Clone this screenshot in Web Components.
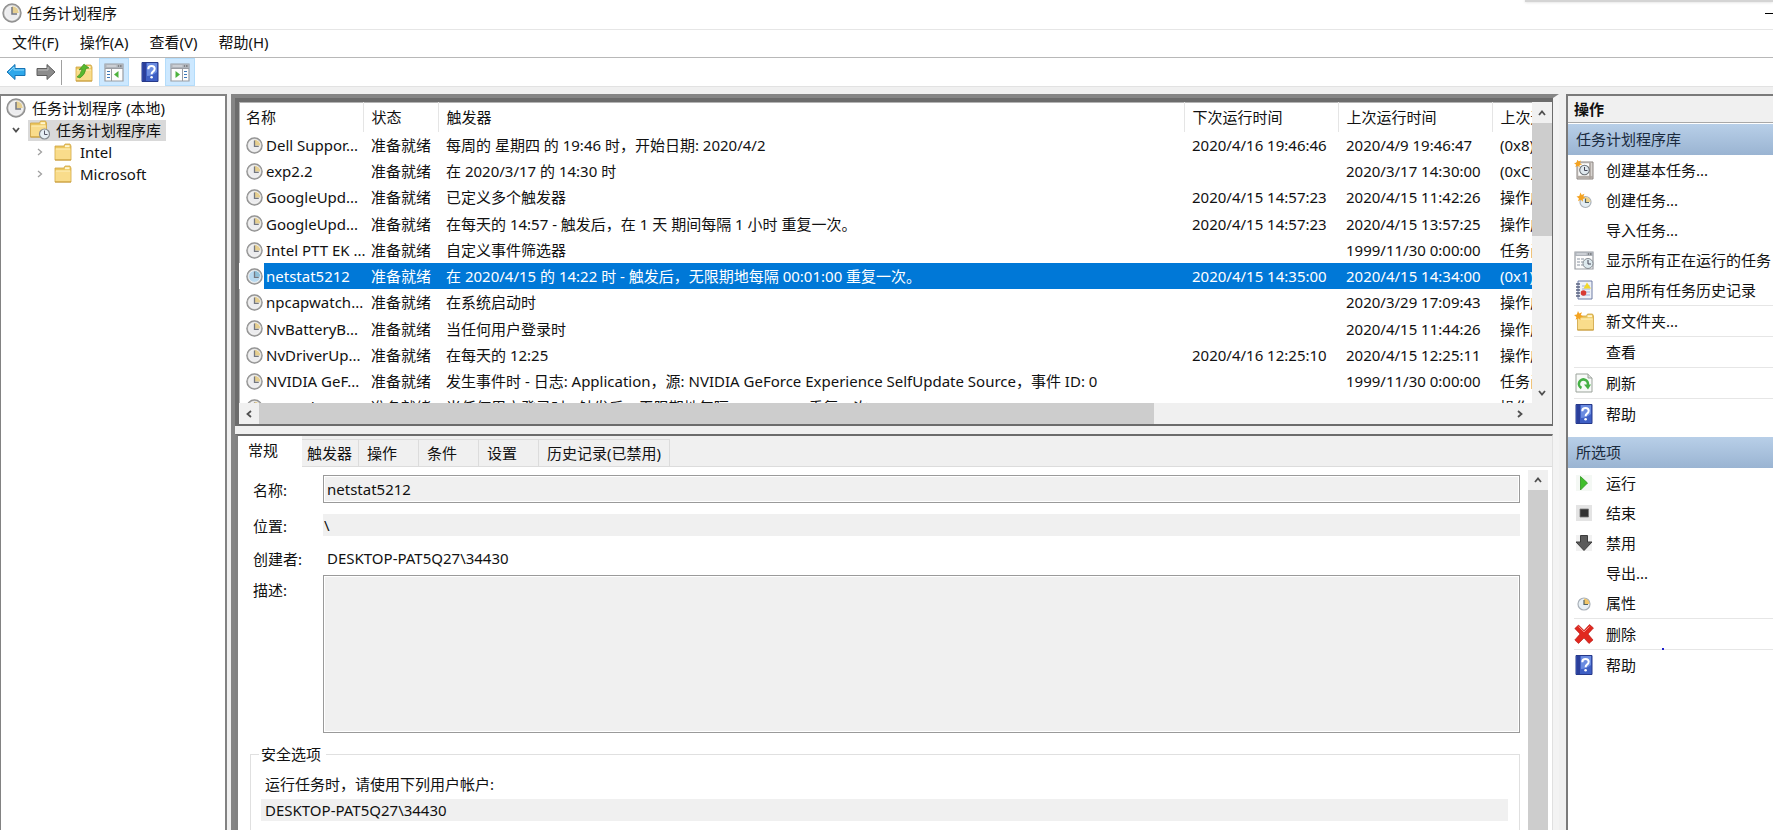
<!DOCTYPE html>
<html lang="zh-CN">
<head>
<meta charset="utf-8">
<title>任务计划程序</title>
<style>
html,body{margin:0;height:100%;overflow:hidden;background:#fff}
body{font:15px/20px "Noto Sans","Noto Sans CJK SC",sans-serif;color:#111}
</style>
</head>
<body>
<task-app></task-app>
<script>
const define = (name, html) => customElements.define(name, class extends HTMLElement {
  connectedCallback() {
    if (this.shadowRoot) return;
    const t = document.createElement('template');
    t.innerHTML = typeof html === 'function' ? html(this) : html;
    this.attachShadow({mode: 'open'}).append(t.content.cloneNode(true));
  }
});

/* ---------- icons ---------- */
const clockArt = (face, wedge) => `<circle cx="10" cy="10" r="9" fill="#c4c4c4" stroke="#909090" stroke-width="1.4"/><circle cx="10" cy="10" r="7" fill="${face}" stroke="#f8f8f8"/><path d="M10 10V3.2A6.8 6.8 0 0 1 16.8 10Z" fill="${wedge}"/><path d="M10 4v7h5" fill="none" stroke="#74777f" stroke-width="1.5"/>`;
const folderArt = '<path d="M2 4h9l1-2h5l1 2v14H2z" fill="#ecc65f" stroke="#cfa544" stroke-width=".8"/><path d="M12 3.2h4.500v2H12z" fill="#fff6d0"/><path d="M2.500 6.500h15V17.500h-15z" fill="#f9dc8b"/><path d="M3 7h14" stroke="#fff0bd"/><path d="M2 18h16" stroke="#c79c3c"/>';
const star = '<path d="M5 0l1.500 3L10 1.500 8.500 5l3 2-3.500 1v3.500L5.500 9 2 11l1-3.500L0 5l3.500-.5z" fill="#f4a321"/>';
const winArt = '<path d="M1 2h18v17H1z" fill="#fdfdfd" stroke="#9a9da3" stroke-width="1.200"/><path d="M1 2h18v4H1z" fill="#aeb3ba"/><path d="M2.500 4h10" stroke="#e8eaee"/><path d="M14 4h1m1 0h1.500" stroke="#555"/>';
const ICONS = {
  clock: clockArt('#ececee', '#e6cf90'),
  'clock-sel': clockArt('#b9daf0', '#8fc0d8'),
  mini: '<circle cx="10" cy="11" r="6" fill="#e8f0f6" stroke="#a9b0b8" stroke-width="1.200"/><path d="M10 11V5.500A5.500 5.500 0 0 1 15.500 11Z" fill="#f1c66a"/><path d="M10 7v4.500h4" fill="none" stroke="#566" stroke-width="1.200"/>',
  'new-task': '<circle cx="11.500" cy="12" r="5.500" fill="#e4edf4" stroke="#a9b0b8" stroke-width="1.200"/><path d="M11.500 12V7A5 5 0 0 1 16.500 12Z" fill="#f1d48a"/><path d="M11.500 8.500v4h3.500" fill="none" stroke="#566" stroke-width="1.200"/><g transform="translate(2.500 2.500) scale(.8)">' + star + '</g>',
  basic: '<path d="M3 2h16v17H3z" fill="#d8d4d0" stroke="#8b8480"/><path d="M4.500 3.500h11v12h-11z" fill="#fff"/><path d="M16 3v16M4 17h15" stroke="#a8a09a" stroke-width="1.500"/><circle cx="10.500" cy="10" r="4.800" fill="#dfe8ee" stroke="#6c7278" stroke-width="1.100"/><path d="M10.500 7v3.500h3" fill="none" stroke="#445"/><g transform="translate(0 -.5) scale(.7)">' + star + '</g>',
  folder: folderArt,
  'folder-new': '<g transform="translate(1.500 1)">' + folderArt + '</g><g transform="scale(.8)">' + star + '</g>',
  'folder-clock': '<g transform="translate(-1.500 -1)">' + folderArt + '</g><circle cx="14.500" cy="14" r="5" fill="#e6eff5" stroke="#858b91" stroke-width="1.200"/><path d="M14.500 10.500v4h3" fill="none" stroke="#556"/>',
  up: '<g transform="translate(0 1)">' + folderArt + '</g><path d="M3 15q4-3 5-8L5 8l5-6 5 4-3 .5Q11 13 6 16z" fill="#57b82e" stroke="#37881b" stroke-width=".6"/>',
  back: '<path d="M1 10 9 2.500V6.500h10v7H9v4z" fill="#2fa8ea" stroke="#1673b4"/><path d="M3 10l5-5v3h10" fill="none" stroke="#8fd8fa"/>',
  fwd: '<path d="M19 10l-8-7.500V6.500H1v7h10v4z" fill="#8c8c8c" stroke="#5f5f5f"/><path d="M2 8h10V5" fill="none" stroke="#bbb"/>',
  help: '<path d="M2 .5h16v19H2z" fill="#3e5fc4" stroke="#26398a"/><path d="M3 1h3v18H3z" fill="#2b3f9b"/><path d="M7 1h10v9q-5 4-10 4z" fill="#6b8ce0"/><path d="M8.300 7.200q0-3.200 3.200-3.200t3.200 2.800q0 1.700-1.700 2.800-1.400 1-1.400 2.600" fill="none" stroke="#fff" stroke-width="2"/><circle cx="11.600" cy="15.300" r="1.300" fill="#fff"/>',
  'pane-left': winArt + '<path d="M7.500 6.500V19M1 6.500h18" stroke="#9a9da3"/><path d="M3 9.500h3M3 12.500h3M3 15.500h3" stroke="#3d78b8"/><path d="M14.500 9v7L10 12.500z" fill="#4db33d"/>',
  'pane-right': winArt + '<path d="M12.500 6.500V19M1 6.500h18" stroke="#9a9da3"/><path d="M14 9.500h3M14 12.500h3M14 15.500h3" stroke="#3d78b8"/><path d="M5.500 9v7l4.500-3.500z" fill="#4db33d"/>',
  running: winArt + '<path d="M3 9h3m1 0h3M3 12h3m1 0h3M3 15h3m1 0h2" stroke="#8a93a0"/><circle cx="14" cy="13.500" r="5" fill="#dde9ee" stroke="#868c92"/><path d="M14 10v4h3" fill="none" stroke="#445"/>',
  history: '<path d="M4 1h14v18H4z" fill="#eef1f8" stroke="#6f7da5"/><path d="M2 4h4M2 7h4M2 10h4M2 13h4M2 16h4" stroke="#5a6380" stroke-width="1.400"/><path d="M8 6h8M8 9h8M8 12h8M8 15h8" stroke="#9fb0d8"/><path d="M13 2.500l4 6H9.500z" fill="#f2d82a"/><circle cx="9.500" cy="13" r="2.800" fill="#d83a34"/>',
  refresh: '<path d="M2 1h12l4 4v14H2z" fill="#f8faf8" stroke="#9ba39b"/><path d="M14 1v4h4" fill="#ddd" stroke="#9ba39b"/><path d="M7.500 15A4.500 4.500 0 1 1 13.800 12" fill="none" stroke="#45b045" stroke-width="2.600"/><path d="M10 11.500h7l-3 5z" fill="#45b045"/>',
  run: '<path d="M2 2h16v16H2z" fill="#f4f8f4"/><path d="M6.500 3.500l7 6.500-7 7z" fill="#3fbf2b" stroke="#2c941d" stroke-width=".8"/>',
  stop: '<path d="M2 2h16v16H2z" fill="#e4e4e4"/><path d="M6 6h8.500v8H6z" fill="#333" stroke="#777" stroke-width=".8"/>',
  disable: '<path d="M2 2h16v16H2z" fill="#f1f1f1"/><path d="M6.500 2.500h7V9H18l-8 8.500L2 9h4.500z" fill="#5b5b5b" stroke="#3c3c3c"/>',
  del: '<path d="M4.500 1 10 6.500 15.500.5 19.500 4 14 10l5 6-4 3.500-5-5.500-5.500 5.500L.8 16 6 10 .8 4.500z" fill="#e1281f" stroke="#b3130e" stroke-width=".6"/><path d="M4.500 2.500 10 8l5.500-5.500" fill="none" stroke="#f58a80"/>',
  none: ''
};
define('ts-icon', el => `<style>:host{display:block;flex:none;width:20px;height:20px}:host([small]){width:17px;height:17px}svg{display:block;width:100%;height:100%}</style><svg viewBox="0 0 20 20" aria-hidden="true">${ICONS[el.getAttribute('name')]}</svg>`);

/* chevron glyph, pointed by the "dir" attribute */
const DIRS = {up: 'M2 7l3-3.500L8 7', down: 'M2 3l3 3.500L8 3', left: 'M7 2 3.500 5 7 8', right: 'M3 2l3.500 3L3 8'};
define('ts-chevron', el => `<style>:host{display:block;flex:none;width:10px;height:10px;color:#505050}:host([thin]){color:#a0a0a0}svg{display:block}</style><svg width="10" height="10" viewBox="0 0 10 10"><path d="${DIRS[el.getAttribute('dir')]}" fill="none" stroke="currentColor" stroke-width="${el.hasAttribute('thin') ? 1.3 : 1.8}"/></svg>`);

const BTN = 'button{font:inherit;color:inherit;background:none;border:0;padding:0;margin:0;text-align:left}';

define('ts-titlebar', `<style>
:host{display:flex;align-items:flex-start;gap:5px;height:26px;padding:3px 0 0 2px;border-bottom:1px solid #e6e6e6;position:relative;flex:none}
h1{font:inherit;margin:0;flex:1}
.shade{position:absolute;top:0;right:0;width:14%;height:2px;background:#d4d4d4;box-shadow:0 0 3px #ccc}
button{width:8px;height:20px;padding:0;border:0;background:linear-gradient(#000,#000) 0 10px/8px 1px no-repeat}
</style><ts-icon name="clock"></ts-icon><h1><slot></slot></h1><div class="shade"></div><button aria-label="最小化"></button>`);

define('ts-menubar', `<style>${BTN}
:host{display:flex;gap:21px;height:24px;padding:0 0 3px 12px;border-bottom:1px solid #b8b8b8;flex:none;align-items:center}
</style><button>文件(F)</button><button>操作(A)</button><button>查看(V)</button><button>帮助(H)</button>`);

define('ts-toolbar', `<style>${BTN}
:host{display:flex;align-items:center;height:28px;padding-left:1px;border-bottom:1px solid #e2e2e2;flex:none}
button{width:30px;height:28px;display:flex;align-items:center;justify-content:center}
.on{background:#cce8ff;box-shadow:inset 0 0 0 1px #b4dcfa}
hr{width:1px;height:25px;border:0;background:#a0a0a0;margin:0 7px 0 0}
.gap{margin-left:6px}
</style><button aria-label="后退"><ts-icon name="back"></ts-icon></button><button aria-label="前进"><ts-icon name="fwd"></ts-icon></button><hr>
<button aria-label="上一级"><ts-icon name="up"></ts-icon></button><button class="on" aria-label="显示控制台树"><ts-icon name="pane-left"></ts-icon></button>
<button class="gap" aria-label="帮助"><ts-icon name="help"></ts-icon></button><button class="on" aria-label="显示操作窗格"><ts-icon name="pane-right"></ts-icon></button>`);

define('ts-tree-item', el => `<style>
:host{display:flex;align-items:center;height:22px}
:host([level="0"]){padding-left:6px;height:23px}:host([level="1"]){padding-left:11px}:host([level="2"]){padding-left:35px}
a{display:flex;align-items:center;color:inherit;text-decoration:none;height:21px;white-space:nowrap}
:host([level="0"]) a{gap:6px}:host([level="1"]) a{gap:6px;margin-left:7px;padding:0 5px 0 2px;background:#d9d9d9}:host([level="2"]) a{gap:7px;margin-left:8px}
</style>${el.getAttribute('level') === '0' ? '' : `<ts-chevron dir="${el.getAttribute('dir')}" ${el.getAttribute('level') === '2' ? 'thin' : ''}></ts-chevron>`}
<a href="#"><ts-icon name="${el.getAttribute('icon')}"></ts-icon><span><slot></slot></span></a>`);

define('ts-tree', `<style>:host{display:block;box-sizing:border-box;background:#fff;border:2px solid #828282;border-width:2px 2px 0 1px}
nav{margin-left:-1px}</style><nav><ts-tree-item level="0" icon="clock">任务计划程序 (本地)</ts-tree-item>
<ts-tree-item level="1" dir="down" icon="folder-clock">任务计划程序库</ts-tree-item>
<ts-tree-item level="2" dir="right" icon="folder">Intel</ts-tree-item>
<ts-tree-item level="2" dir="right" icon="folder">Microsoft</ts-tree-item></nav>`);

/* ---------- task list ---------- */
const R = '准备就绪', OK = '操作成功完成。', NOT = '任务尚未运行。';
const TASKS = [
  ['Dell Suppor...', '每周的 星期四 的 19:46 时，开始日期: 2020/4/2', '2020/4/16 19:46:46', '2020/4/9 19:46:47', '(0x8)'],
  ['exp2.2', '在 2020/3/17 的 14:30 时', '', '2020/3/17 14:30:00', '(0xC)'],
  ['GoogleUpd...', '已定义多个触发器', '2020/4/15 14:57:23', '2020/4/15 11:42:26', OK],
  ['GoogleUpd...', '在每天的 14:57 - 触发后，在 1 天 期间每隔 1 小时 重复一次。', '2020/4/15 14:57:23', '2020/4/15 13:57:25', OK],
  ['Intel PTT EK ...', '自定义事件筛选器', '', '1999/11/30 0:00:00', NOT],
  ['netstat5212', '在 2020/4/15 的 14:22 时 - 触发后，无限期地每隔 00:01:00 重复一次。', '2020/4/15 14:35:00', '2020/4/15 14:34:00', '(0x1)'],
  ['npcapwatch...', '在系统启动时', '', '2020/3/29 17:09:43', OK],
  ['NvBatteryB...', '当任何用户登录时', '', '2020/4/15 11:44:26', OK],
  ['NvDriverUp...', '在每天的 12:25', '2020/4/16 12:25:10', '2020/4/15 12:25:11', OK],
  ['NVIDIA GeF...', '发生事件时 - 日志: Application，源: NVIDIA GeForce Experience SelfUpdate Source，事件 ID: 0', '', '1999/11/30 0:00:00', NOT],
  ['NvNodeLa...', '当任何用户登录时 - 触发后，无限期地每隔 1.00:00:00 重复一次。', '', '2020/4/15 11:43:26', OK]
];
const SEL = 5;
define('ts-task-list', `<style>${BTN}
:host{display:grid;grid-template-columns:minmax(0,1fr) 20px;grid-template-rows:minmax(0,1fr) 21px;box-sizing:border-box;height:328px;flex:none;background:#fff;border-style:solid;border-color:#6c6c6c;border-width:4px 1px 2px 4px;box-shadow:inset 1px 1px #b4b4b4}
.view{overflow:hidden}
table{border-collapse:collapse;table-layout:fixed;width:100%}
th,td{padding:0 0 0 8px;font-weight:400;text-align:left;white-space:nowrap;overflow:hidden;height:26px}
tr:nth-child(4n) td{height:27px}
th{height:30px;border-right:1px solid #e5e5e5;box-sizing:border-box}
th:last-child{border:0}
.c1{width:124px}.c2{width:75px}.c4,.c5{width:154px}.c6{width:40px}
td:first-child{padding:0;overflow:visible}
.name{display:flex;align-items:center;height:26px;padding-left:7px}
th:first-child{padding-left:7px}
.name span{padding-left:2px;line-height:26px;flex:1}
tr.sel td{background:#0078d7;color:#fff}
tr.sel td:first-child{background:#fff}
tr.sel .name span{background:#0078d7}
.name ts-icon{margin-right:1px}
.vs{background:#f0f0f0;display:flex;flex-direction:column;align-items:center;justify-content:space-between}
.vs button,.hs button{width:20px;height:21px;display:grid;place-items:center}
.vs .thumb{width:100%;height:113px;background:#cdcdcd;margin-bottom:auto}
.hs{grid-column:1/3;background:#f0f0f0;display:flex;justify-content:space-between;padding-right:22px}
.hs .thumb{flex:0 1 895px;background:#cdcdcd;margin-right:auto}
</style>
<div class="view"><table><thead><tr><th class="c1">名称</th><th class="c2">状态</th><th>触发器</th><th class="c4">下次运行时间</th><th class="c5">上次运行时间</th><th class="c6">上次运行结果</th></tr></thead><tbody>
${TASKS.map((t, i) => `<tr${i === SEL ? ' class="sel"' : ''}><td><div class="name"><ts-icon small name="clock${i === SEL ? '-sel' : ''}"></ts-icon><span>${t[0]}</span></div></td><td>${R}</td><td>${t[1]}</td><td>${t[2]}</td><td>${t[3]}</td><td>${t[4]}</td></tr>`).join('')}
</tbody></table></div>
<div class="vs"><button aria-label="向上滚动"><ts-chevron dir="up"></ts-chevron></button><div class="thumb"></div><button aria-label="向下滚动"><ts-chevron dir="down"></ts-chevron></button></div>
<div class="hs"><button aria-label="向左滚动"><ts-chevron dir="left"></ts-chevron></button><div class="thumb"></div><button aria-label="向右滚动"><ts-chevron dir="right"></ts-chevron></button></div>`);

/* ---------- details ---------- */
define('ts-tabs', `<style>${BTN}
:host{display:flex;align-items:flex-end;height:31px;background:#f0f0f0;flex:none;box-shadow:inset 0 -1px #dcdcdc}
button{box-sizing:border-box;height:28px;min-width:60px;padding:0 8px;border:1px solid #dcdcdc;border-left-width:0}
.on{height:31px;min-width:64px;padding:0 10px 4px;background:#fff;border-color:#fff}
.on + button{min-width:57px;padding:0 5px}
</style><button class="on" role="tab" aria-selected="true">常规</button><button role="tab">触发器</button><button role="tab">操作</button><button role="tab">条件</button><button role="tab">设置</button><button role="tab">历史记录(已禁用)</button>`);

define('ts-general', `<style>${BTN}
:host{display:grid;grid-template-columns:minmax(0,1fr) 20px;flex:1;min-height:0;background:#fff;padding-right:4px;overflow:hidden}
form{padding:8px 8px 0 12px}
.row{display:grid;grid-template-columns:70px minmax(0,1fr);padding-left:3px;align-items:center;margin-bottom:11px}
.row label{padding-top:2px}
.tight{margin-bottom:6px}
.top{align-items:start}
.top label{padding-top:5px}
input,textarea{font:inherit;color:inherit;box-sizing:border-box;width:100%;margin:0;border:0;border-radius:0;background:#f0f0f0;outline:0;resize:none;display:block}
.box{border:1px solid #9a9a9a;box-shadow:inset 0 0 0 1px #fff;height:28px;padding:0 3px}
.flat{height:22px;padding:0 1px}
.plain{background:#fff;height:22px;padding:0 4px}
textarea.box{height:158px}
fieldset{margin:0;padding:7px 11px 40px 10px;border:1px solid #e0e0e0}
legend{padding:0 5px 0 2px;margin-left:-2px}
fieldset label{display:block;padding:3px 0 5px 4px}
.acct{height:22px;padding:0 4px}
.vs{background:#f0f0f0;margin-top:3px;display:flex;flex-direction:column}
.vs button{height:20px;display:grid;place-items:center}
.thumb{flex:1;background:#cdcdcd}
</style><form>
<div class="row"><label for="n">名称:</label><input id="n" class="box" readonly value="netstat5212"></div>
<div class="row"><label for="l">位置:</label><input id="l" class="flat" readonly value="\\"></div>
<div class="row tight"><label for="a">创建者:</label><input id="a" class="plain" readonly value="DESKTOP-PAT5Q27\\34430"></div>
<div class="row top"><label for="d">描述:</label><textarea id="d" class="box" readonly></textarea></div>
<fieldset><legend>安全选项</legend><label for="u">运行任务时，请使用下列用户帐户:</label><input id="u" class="acct" readonly value="DESKTOP-PAT5Q27\\34430"></fieldset>
</form><div class="vs"><button aria-label="向上滚动"><ts-chevron dir="up"></ts-chevron></button><div class="thumb"></div></div>`);

define('ts-details', `<style>:host{display:flex;flex-direction:column;flex:1;min-height:0;margin-top:8px;border-top:2px solid #6c6c6c;border-left:3px solid #828282;border-right:1px solid #e0e0e0}</style><ts-tabs></ts-tabs><ts-general></ts-general>`);

define('ts-center', `<style>:host{display:flex;flex-direction:column;min-width:0;border-style:solid;border-width:4px 6px 0 4px;border-color:#858585 #f3f3f3 #858585 #858585}</style><ts-task-list></ts-task-list><ts-details></ts-details>`);

/* ---------- actions ---------- */
define('ts-action', el => `<style>${BTN}
:host{display:block;height:30px}:host([sep]){border-top:1px solid #e6e6e6;margin-left:6px}
:host([sep]) button{padding-left:0}
button{display:flex;align-items:center;gap:12px;width:100%;height:30px;padding-left:6px;white-space:nowrap}
</style><button><ts-icon name="${el.getAttribute('icon')}"></ts-icon><span><slot></slot></span></button>`);
define('ts-action-group', el => `<style>:host{display:block;padding-bottom:8px}
h3{font:inherit;margin:0;height:31px;line-height:31px;padding-left:8px;background:linear-gradient(#b8cfe8,#9ab4d2);color:#1a2a3d}</style><h3>${el.getAttribute('heading')}</h3><slot></slot>`);
define('ts-actions', `<style>:host{display:block;background:#fff;border-left:2px solid #7a7a7a;border-top:2px solid #7a7a7a;overflow:hidden;position:relative}
h2{font:inherit;font-weight:700;margin:0 0 1px;height:26px;line-height:26px;padding-left:6px;background:#f0f0f0;border-bottom:1px solid #a8a8a8}
.dot{display:block;position:absolute;left:94px;top:552px;width:2px;height:2px;background:#22c}</style>
<h2>操作</h2>
<ts-action-group heading="任务计划程序库">
<ts-action icon="basic">创建基本任务...</ts-action><ts-action icon="new-task">创建任务...</ts-action><ts-action icon="none">导入任务...</ts-action><ts-action icon="running">显示所有正在运行的任务</ts-action><ts-action icon="history">启用所有任务历史记录</ts-action>
<ts-action sep icon="folder-new">新文件夹...</ts-action><ts-action sep icon="none">查看</ts-action><ts-action sep icon="refresh">刷新</ts-action><ts-action sep icon="help">帮助</ts-action>
</ts-action-group>
<ts-action-group heading="所选项">
<ts-action icon="run">运行</ts-action><ts-action icon="stop">结束</ts-action><ts-action icon="disable">禁用</ts-action><ts-action icon="none">导出...</ts-action><ts-action icon="mini">属性</ts-action>
<ts-action sep icon="del">删除</ts-action><ts-action sep icon="help">帮助</ts-action>
</ts-action-group><i class="dot"></i>`);

define('task-app', `<style>
:host{display:flex;flex-direction:column;height:100vh;overflow:hidden}
main{flex:1;min-height:0;display:grid;grid-template-columns:227px minmax(0,1fr) 207px;grid-template-rows:minmax(0,1fr);background:#f0f0f0;padding-top:7px}
ts-center{margin:0 7px 0 4px}
</style><ts-titlebar>任务计划程序</ts-titlebar><ts-menubar></ts-menubar><ts-toolbar></ts-toolbar>
<main><ts-tree></ts-tree><ts-center></ts-center><ts-actions></ts-actions></main>`);
</script>
</body>
</html>
